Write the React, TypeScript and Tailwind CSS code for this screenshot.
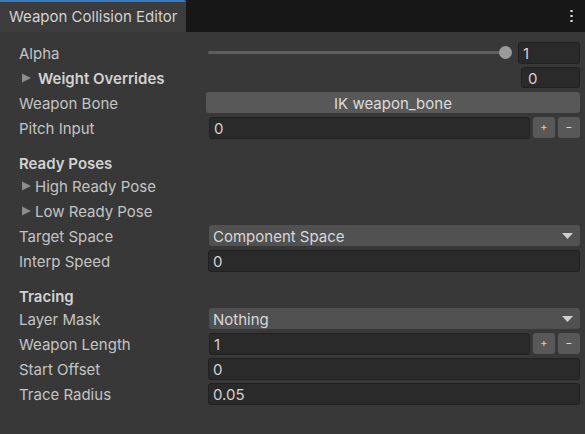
import React from "react";

const font = { fontFamily: "Inter, 'Noto Sans', sans-serif" };

function Label({ children, bold }: { children: React.ReactNode; bold?: boolean }) {
  return (
    <div className={`w-[188px] shrink-0 pl-[19px] ${bold ? "pt-[3px] font-semibold text-[#d2d2d2]" : "pt-[1px] text-[#c4c4c4]"}`}>
      {children}
    </div>
  );
}

function Row({ children, h = "h-[25px]" }: { children: React.ReactNode; h?: string }) {
  return <div className={`flex items-center ${h}`}>{children}</div>;
}

function Field({ value }: { value: string }) {
  return (
    <div className="flex h-[22px] flex-1 items-center rounded-[3px] border border-[#212121] bg-[#2a2a2a] pl-[4px] pt-[1px] text-[#d2d2d2]">
      {value}
    </div>
  );
}

function Stepper() {
  return (
    <div className="ml-[3px] flex gap-[3px]">
      <div className="flex h-[21px] w-[22px] items-center justify-center rounded-[3px] bg-[#585858] text-[11px] text-[#d6d6d6]">
        +
      </div>
      <div className="flex h-[21px] w-[22px] items-center justify-center rounded-[3px] bg-[#585858] text-[11px] text-[#d6d6d6]">
        −
      </div>
    </div>
  );
}

function Dropdown({ value }: { value: string }) {
  return (
    <div className="flex h-[21px] flex-1 items-center justify-between rounded-[3px] bg-[#515151] pl-[4px] pr-[7px] text-[#d8d8d8]">
      <span className="pt-[1px]">{value}</span>
      <svg width="11" height="6" viewBox="0 0 11 6">
        <path d="M0 0 H11 L5.5 6 Z" fill="#cfcfcf" />
      </svg>
    </div>
  );
}

function Caret() {
  return (
    <svg width="10" height="10" viewBox="0 0 10 10" className="mr-[3px]">
      <path d="M0 0.5 L9 5 L0 9.5 Z" fill="#8c8c8c" />
    </svg>
  );
}

export default function App() {
  return (
    <div style={font} className="h-[434px] w-[585px] overflow-hidden bg-[#383838] text-[15px] leading-none">
      {/* header strip with the single tab */}
      <div className="flex h-[32px] bg-[#171717]">
        <div className="relative flex w-[186px] items-center rounded-tr-[3px] bg-[#3c3c3c] pl-[9px] pt-[1px] text-[15px] text-[#d2d2d2]">
          <div className="absolute left-0 right-0 top-0 h-[2px] rounded-tr-[3px] bg-[#3a79bb]" />
          Weapon Collision Editor
        </div>
        <div className="flex-1" />
        <div className="flex w-[26px] flex-col items-center justify-center gap-[2.5px] pr-[1px]">
          <div className="h-[2.5px] w-[2.5px] rounded-full bg-[#cfcfcf]" />
          <div className="h-[2.5px] w-[2.5px] rounded-full bg-[#cfcfcf]" />
          <div className="h-[2.5px] w-[2.5px] rounded-full bg-[#cfcfcf]" />
        </div>
      </div>

      <div className="pr-[5px] pt-[8px]">
        <Row>
          <Label>Alpha</Label>
          <div className="ml-[20px] flex flex-1 items-center">
            <div className="relative h-[3px] flex-1 rounded-full bg-[#5e5e5e]">
              <div className="absolute right-[-7px] top-[-5px] h-[13px] w-[13px] rounded-full bg-[#9a9a9a]" />
            </div>
            <div className="ml-[13px] flex h-[22px] w-[62px] items-center rounded-[3px] border border-[#212121] bg-[#2a2a2a] pl-[4px] pt-[1px] text-[#d2d2d2]">
              1
            </div>
          </div>
        </Row>
        <Row>
          <div className="flex flex-1 items-center pl-[22px] pt-[1px] font-semibold text-[#d2d2d2]">
            <Caret />
            <span className="ml-[3px]">Weight Overrides</span>
          </div>
          <div className="flex h-[21px] w-[59px] items-center rounded-[3px] border border-[#212121] bg-[#2a2a2a] pl-[6px] pt-[1px] text-[#d2d2d2]">
            0
          </div>
        </Row>
        <Row>
          <Label>Weapon Bone</Label>
          <div className="ml-[18px] flex h-[21px] flex-1 items-center justify-center rounded-[3px] bg-[#585858] pt-[1px] text-[#dcdcdc]">
            IK weapon_bone
          </div>
        </Row>
        <Row>
          <Label>Pitch Input</Label>
          <div className="ml-[21px] flex flex-1 items-center">
            <Field value="0" />
            <Stepper />
          </div>
        </Row>

        <div className="h-[11px]" />
        <Row h="h-[22px]">
          <Label bold>Ready Poses</Label>
        </Row>
        <Row>
          <div className="flex items-center pl-[22px] pt-[1px] text-[#c4c4c4]">
            <Caret />
            High Ready Pose
          </div>
        </Row>
        <Row>
          <div className="flex items-center pl-[22px] pt-[1px] text-[#c4c4c4]">
            <Caret />
            Low Ready Pose
          </div>
        </Row>
        <Row>
          <Label>Target Space</Label>
          <div className="ml-[21px] flex flex-1">
            <Dropdown value="Component Space" />
          </div>
        </Row>
        <Row>
          <Label>Interp Speed</Label>
          <div className="ml-[20px] flex flex-1">
            <Field value="0" />
          </div>
        </Row>

        <div className="h-[11px]" />
        <Row h="h-[22px]">
          <Label bold>Tracing</Label>
        </Row>
        <Row>
          <Label>Layer Mask</Label>
          <div className="ml-[21px] flex flex-1">
            <Dropdown value="Nothing" />
          </div>
        </Row>
        <Row>
          <Label>Weapon Length</Label>
          <div className="ml-[21px] flex flex-1 items-center">
            <Field value="1" />
            <Stepper />
          </div>
        </Row>
        <Row>
          <Label>Start Offset</Label>
          <div className="ml-[20px] flex flex-1">
            <Field value="0" />
          </div>
        </Row>
        <Row>
          <Label>Trace Radius</Label>
          <div className="ml-[20px] flex flex-1">
            <Field value="0.05" />
          </div>
        </Row>
      </div>
    </div>
  );
}
